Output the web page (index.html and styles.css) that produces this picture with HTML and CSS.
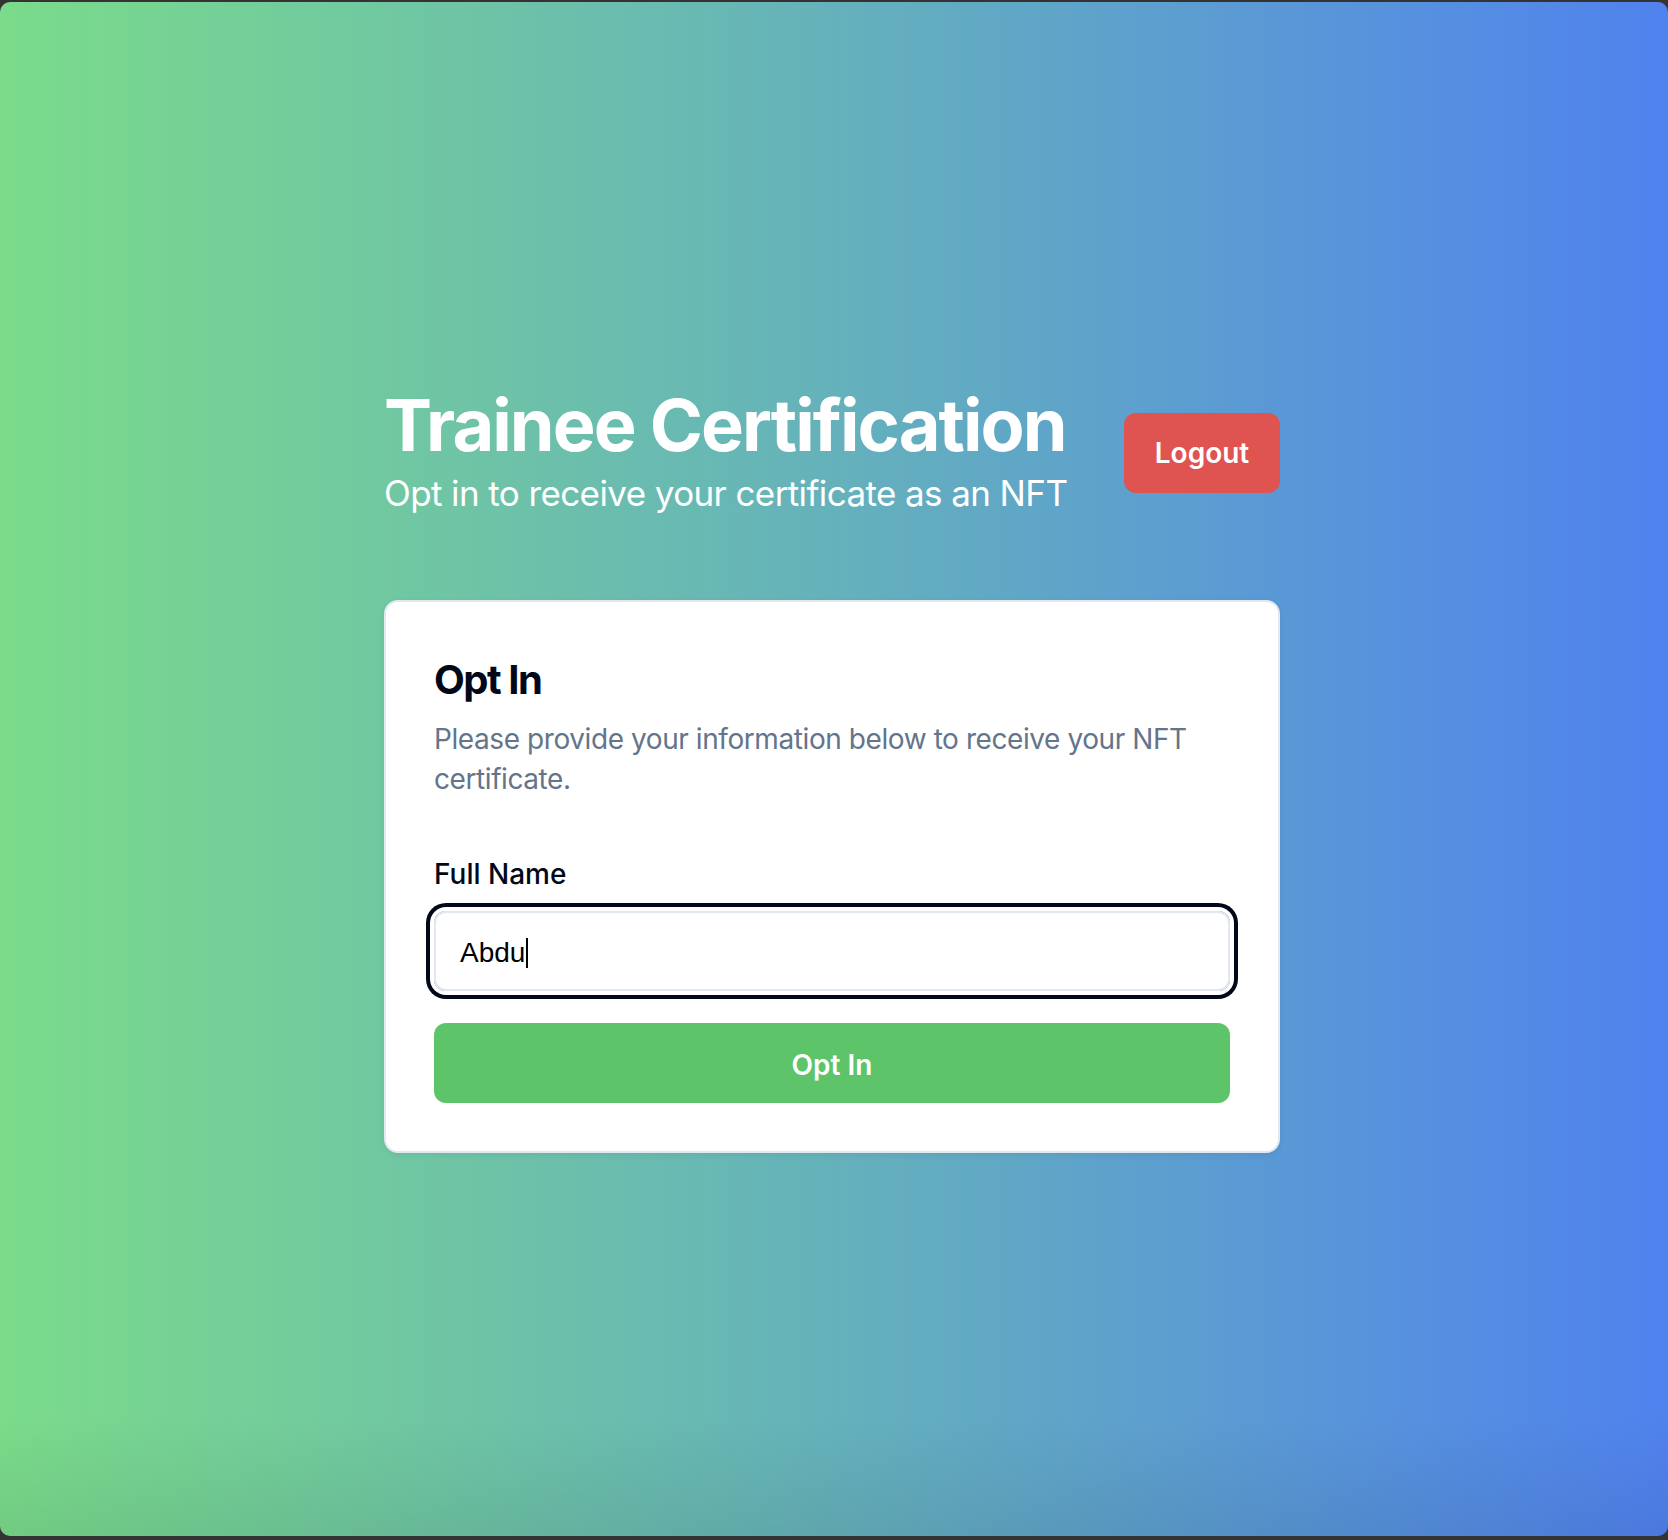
FILE: index.html
```html
<!DOCTYPE html>
<html lang="en">
<head>
<meta charset="utf-8">
<title>Trainee Certification</title>
<link rel="stylesheet" href="styles.css">
</head>
<body>
<div class="window">
  <main class="page">
    <header class="header">
      <div class="titles">
        <h1 class="title">Trainee Certification</h1>
        <p class="subtitle">Opt in to receive your certificate as an NFT</p>
      </div>
      <button class="logout" type="button">Logout</button>
    </header>
    <section class="card">
      <h2 class="card-title">Opt In</h2>
      <p class="card-desc">Please provide your information below to receive your NFT certificate.</p>
      <label class="label" for="fullname">Full Name</label>
      <div class="input-ring">
        <div class="input" id="fullname" role="textbox" aria-label="Full Name">Abdu<span class="caret"></span></div>
      </div>
      <button class="submit" type="button">Opt In</button>
    </section>
  </main>
</div>
</body>
</html>
```

FILE: styles.css
```css
* { box-sizing: border-box; }
html, body { margin: 0; padding: 0; }
body {
  background: #333333;
  width: 1668px;
  height: 1540px;
  overflow: hidden;
  font-family: "Inter", "Noto Sans", sans-serif;
}
.window {
  position: relative;
  margin-top: 2px;
  height: 1534px;
  border-radius: 10px;
  overflow: hidden;
  background: linear-gradient(90deg, #7adb8a 0%, #67b6b6 45%, #5082ee 100%);
  display: flex;
  align-items: center;
  justify-content: center;
  padding-right: 4px;
}
.window::after {
  content: "";
  position: absolute;
  left: 0; right: 0; bottom: 0;
  height: 120px;
  background: linear-gradient(180deg, rgba(0,0,0,0) 0%, rgba(0,0,0,0.07) 100%);
  pointer-events: none;
}
.page {
  width: 896px;
  display: flex;
  flex-direction: column;
  gap: 79px;
}
.header {
  display: flex;
  justify-content: space-between;
  align-items: center;
}
.title {
  margin: 0;
  font-size: 72px;
  line-height: 80px;
  font-weight: 700;
  color: #ffffff;
  letter-spacing: -1.95px;
}
.subtitle {
  margin: 0;
  font-size: 35px;
  line-height: 56px;
  font-weight: 400;
  color: #ffffff;
  letter-spacing: -0.6px;
}
.logout {
  width: 156px;
  height: 80px;
  border: none;
  border-radius: 12px;
  background: #df5350;
  color: #ffffff;
  font-family: "Inter", sans-serif;
  font-size: 28px;
  font-weight: 600;
  padding: 0;
}
.card {
  background: #ffffff;
  border: 2px solid #e2e8f0;
  border-radius: 14px;
  box-shadow: 0 2px 6px rgba(0,0,0,0.06);
  padding: 58px 48px 48px 48px;
  display: flex;
  flex-direction: column;
}
.card-title {
  margin: 0;
  font-size: 40px;
  line-height: 40px;
  font-weight: 700;
  letter-spacing: -1.5px;
  color: #020817;
}
.card-desc {
  margin: 19px 0 0 0;
  font-size: 28px;
  line-height: 40px;
  color: #64748b;
  letter-spacing: -0.42px;
}
.label {
  margin-top: 55px;
  font-size: 28px;
  line-height: 40px;
  font-weight: 500;
  color: #020817;
}
.input-ring {
  margin-top: 17px;
  border-radius: 12px;
  box-shadow: 0 0 0 4px #ffffff, 0 0 0 8px #020817;
}
.input {
  height: 80px;
  border: 2px solid #e2e8f0;
  border-radius: 12px;
  padding: 3px 24px 0 24px;
  display: flex;
  align-items: center;
  font-family: "Liberation Sans", Arial, sans-serif;
  font-size: 28px;
  color: #000000;
  background: #ffffff;
}
.caret {
  display: inline-block;
  width: 2px;
  height: 30px;
  background: #000000;
  margin-left: 1px;
}
.submit {
  margin-top: 32px;
  height: 80px;
  border: none;
  border-radius: 12px;
  background: #5ec46a;
  color: #ffffff;
  font-family: "Inter", sans-serif;
  font-size: 28px;
  font-weight: 600;
  padding: 4px 0 0 0;
}
```
